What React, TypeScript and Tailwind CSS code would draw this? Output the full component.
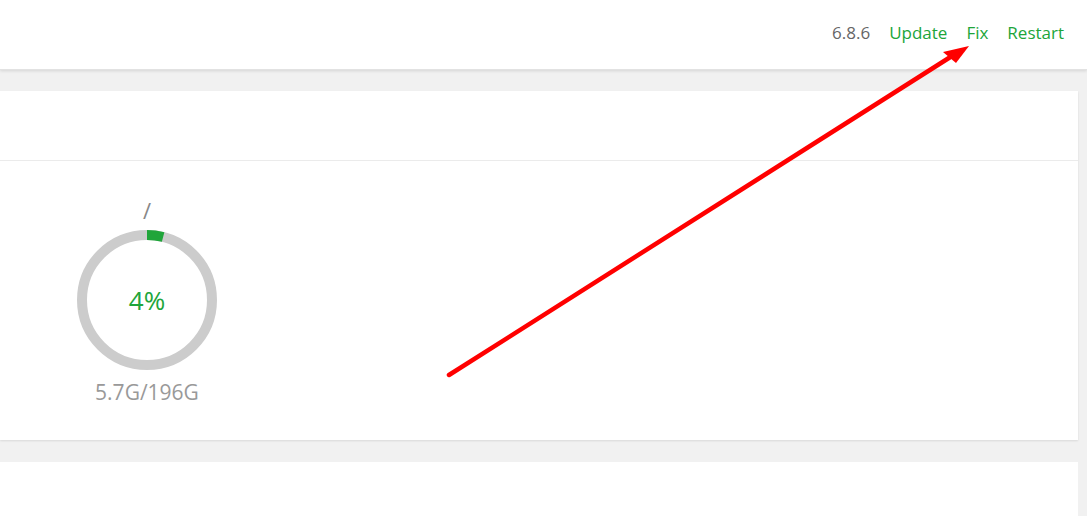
import React from "react";

export default function App() {
  const r = 65;
  const c = 2 * Math.PI * r;
  const pct = 0.04;
  return (
    <div
      className="relative w-[1087px] h-[516px] overflow-hidden bg-[#f1f1f1]"
      style={{ fontFamily: '"Open Sans", "Noto Sans", "Liberation Sans", sans-serif' }}
    >
      <header className="h-[70px] bg-white shadow-[0_1px_3px_rgba(0,0,0,0.12)] border-b border-[#e2e2e2] flex items-center justify-end pr-[23px] pb-[4px] gap-[19px] text-[17px]">
        <span className="text-[#666]">6.8.6</span>
        <a className="text-[#20a53a]">Update</a>
        <a className="text-[#20a53a]">Fix</a>
        <a className="text-[#20a53a]">Restart</a>
      </header>
      <div className="pt-[21px] pr-[9px] flex flex-col gap-[22px]">
        <section className="h-[349px] bg-white shadow-[0_1px_2px_rgba(0,0,0,0.1)]">
          <div className="h-[70px] border-b border-[#ebebeb]" />
          <div className="pl-[77px] pt-[35px] w-[217px] flex flex-col items-center">
            <div className="text-[22px] leading-[28px] text-[#888]">/</div>
            <div className="relative w-[140px] h-[140px] mt-[6px]">
              <svg width="140" height="140" viewBox="0 0 140 140" className="absolute inset-0">
                <circle cx="70" cy="70" r={r} fill="none" stroke="#cccccc" strokeWidth="10" />
                <circle
                  cx="70"
                  cy="70"
                  r={r}
                  fill="none"
                  stroke="#20a53a"
                  strokeWidth="10"
                  strokeDasharray={`${c * pct} ${c}`}
                  transform="rotate(-90 70 70)"
                />
              </svg>
              <div className="absolute inset-0 flex items-center justify-center text-[26px] text-[#20a53a]">
                4%
              </div>
            </div>
            <div className="text-[21px] leading-[26px] text-[#999] mt-[9px] whitespace-nowrap">5.7G/196G</div>
          </div>
        </section>
        <section className="h-[60px] bg-white" />
      </div>
      <svg
        className="absolute left-0 top-0 pointer-events-none"
        width="1087"
        height="516"
        viewBox="0 0 1087 516"
      >
        <line x1="449" y1="375" x2="952" y2="56" stroke="#ff0000" strokeWidth="4.5" strokeLinecap="round" />
        <polygon points="969,46 943,52 956,63" fill="#ff0000" />
      </svg>
    </div>
  );
}
